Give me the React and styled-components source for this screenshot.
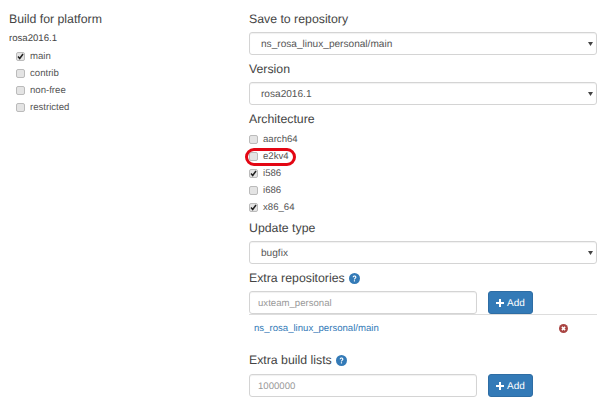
import React from "react";
import styled, { createGlobalStyle } from "styled-components";

const Global = createGlobalStyle`
  html, body { margin: 0; padding: 0; background: #fff; }
  body { font-family: "Liberation Sans", Arial, sans-serif; color: #333; overflow: hidden; text-rendering: geometricPrecision; }
  select, input, button { text-rendering: geometricPrecision; }
`;

const Page = styled.div`
  width: 604px;
  height: 409px;
  display: grid;
  grid-template-columns: 249px 348px;
  overflow: hidden;
`;

const LeftColumn = styled.div`
  padding: 12px 0 0 9px;
`;

const RightColumn = styled.div`
  padding-top: 12px;
  display: flex;
  flex-direction: column;
`;

const Heading = styled.div`
  font-size: 12.3px;
  line-height: 15px;
  color: #444;
  display: flex;
  align-items: center;
  gap: 4px;
  margin-top: ${(p) => p.$top ?? 0}px;
  margin-bottom: ${(p) => p.$bottom ?? 5}px;
`;

const PlatformName = styled.div`
  font-size: 9.6px;
  line-height: 12px;
  color: #444;
  margin: 6px 0 3px;
`;

const CheckList = styled.div`
  display: flex;
  flex-direction: column;
  padding-left: ${(p) => p.$indent}px;
`;

const CheckRow = styled.label`
  position: relative;
  height: 17px;
  display: flex;
  align-items: center;
  gap: 5px;
  font-size: 9.6px;
  color: #555;
`;

const Box = styled.span`
  box-sizing: border-box;
  width: 9px;
  height: 9px;
  border: 1px solid #bbb;
  border-radius: 2px;
  background: #e4e4e4;
  display: flex;
  align-items: center;
  justify-content: center;
`;

const Marker = styled.span`
  position: absolute;
  left: -4px;
  top: 0;
  width: 51px;
  height: 18px;
  box-sizing: border-box;
  border: 3px solid #e30613;
  border-radius: 9px;
`;

const SelectWrap = styled.div`
  position: relative;
  height: 23px;
`;

const Select = styled.select`
  appearance: none;
  box-sizing: border-box;
  width: 100%;
  height: 100%;
  border: 1px solid #d4d4d4;
  border-radius: 3px;
  background: #fff;
  box-shadow: inset 0 1px 1px rgba(0, 0, 0, 0.06);
  padding: 2px 0 0 11px;
  font: 10.1px "Liberation Sans", Arial, sans-serif;
  color: #555;
`;

const Caret = styled.svg`
  position: absolute;
  right: 4px;
  top: 10px;
  width: 5px;
  height: 4px;
  pointer-events: none;
`;

const AddRow = styled.div`
  display: flex;
  align-items: center;
  gap: 11px;
`;

const TextInput = styled.input`
  box-sizing: border-box;
  width: 228px;
  height: 23px;
  border: 1px solid #d4d4d4;
  border-radius: 3px;
  box-shadow: inset 0 1px 1px rgba(0, 0, 0, 0.06);
  padding: 2px 8px 0;
  font: 9.6px "Liberation Sans", Arial, sans-serif;
  color: #555;
  &::placeholder { color: #999; opacity: 1; }
`;

const AddButton = styled.button`
  box-sizing: border-box;
  width: 45px;
  height: 23px;
  border: 1px solid #2e6da4;
  border-radius: 3px;
  background: #337ab7;
  color: #fff;
  font: 10px "Liberation Sans", Arial, sans-serif;
  display: flex;
  align-items: center;
  justify-content: center;
  gap: 3px;
  padding: 1px 0 0;
`;

const RepoRow = styled.div`
  border-top: 1px solid #ddd;
  height: 26px;
  display: flex;
  align-items: center;
  justify-content: space-between;
  padding: 0 29px 0 5px;
`;

const RepoLink = styled.a`
  font-size: 9.6px;
  color: #337ab7;
`;

const HelpIcon = () => (
  <svg width="11" height="11" viewBox="0 0 12 12">
    <circle cx="6" cy="6" r="6" fill="#337ab7" />
    <path d="M4 4.6C4 3.4 5 2.8 6 2.8s2.1.6 2.1 1.8c0 1.5-1.6 1.4-1.6 2.6H5.3c0-1.8 1.5-1.7 1.5-2.6 0-.4-.4-.7-.8-.7s-.8.3-.8.8z" fill="#fff" />
    <rect x="5.3" y="7.9" width="1.3" height="1.3" fill="#fff" />
  </svg>
);

const RemoveIcon = () => (
  <svg width="9" height="9" viewBox="0 0 10 10">
    <circle cx="5" cy="5" r="5" fill="#a94442" />
    <path d="M3.2 3.2l3.6 3.6M6.8 3.2l-3.6 3.6" stroke="#fff" strokeWidth="1.6" />
  </svg>
);

const PlusIcon = () => (
  <svg width="8" height="8" viewBox="0 0 8 8">
    <path d="M3 0h2v3h3v2H5v3H3V5H0V3h3z" fill="#fff" />
  </svg>
);

const CheckMark = () => (
  <svg width="7" height="7" viewBox="0 0 7 7">
    <path d="M1 3.6l1.7 1.9L6 1" fill="none" stroke="#222" strokeWidth="1.5" />
  </svg>
);

const Check = ({ label, checked, marked }) => (
  <CheckRow>
    <Box>{checked && <CheckMark />}</Box>
    {label}
    {marked && <Marker />}
  </CheckRow>
);

const Dropdown = ({ value }) => (
  <SelectWrap>
    <Select defaultValue={value}>
      <option>{value}</option>
    </Select>
    <Caret viewBox="0 0 5 4">
      <path d="M0 0h5L2.5 4z" fill="#444" />
    </Caret>
  </SelectWrap>
);

export default function App() {
  return (
    <Page>
      <Global />
      <LeftColumn>
        <Heading $bottom={0}>Build for platform</Heading>
        <PlatformName>rosa2016.1</PlatformName>
        <CheckList $indent={7}>
          <Check label="main" checked />
          <Check label="contrib" />
          <Check label="non-free" />
          <Check label="restricted" />
        </CheckList>
      </LeftColumn>
      <RightColumn>
        <Heading>Save to repository</Heading>
        <Dropdown value="ns_rosa_linux_personal/main" />
        <Heading $top={7}>Version</Heading>
        <Dropdown value="rosa2016.1" />
        <Heading $top={7} $bottom={4}>Architecture</Heading>
        <CheckList $indent={0}>
          <Check label="aarch64" />
          <Check label="e2kv4" marked />
          <Check label="i586" checked />
          <Check label="i686" />
          <Check label="x86_64" checked />
        </CheckList>
        <Heading $top={5}>Update type</Heading>
        <Dropdown value="bugfix" />
        <Heading $top={7}>Extra repositories <HelpIcon /></Heading>
        <AddRow>
          <TextInput placeholder="uxteam_personal" />
          <AddButton><PlusIcon /> Add</AddButton>
        </AddRow>
        <RepoRow>
          <RepoLink>ns_rosa_linux_personal/main</RepoLink>
          <RemoveIcon />
        </RepoRow>
        <Heading $top={12} $bottom={6}>Extra build lists <HelpIcon /></Heading>
        <AddRow>
          <TextInput placeholder="1000000" />
          <AddButton><PlusIcon /> Add</AddButton>
        </AddRow>
      </RightColumn>
    </Page>
  );
}
